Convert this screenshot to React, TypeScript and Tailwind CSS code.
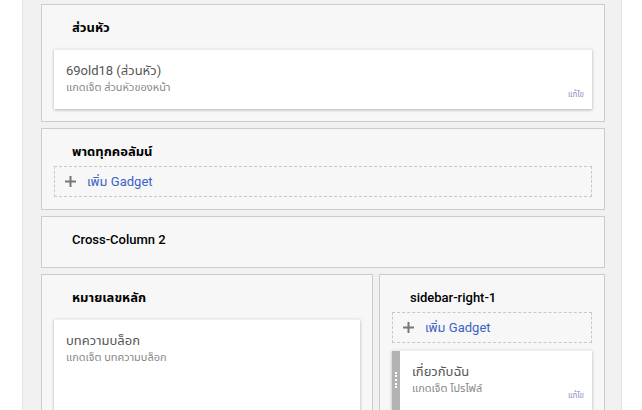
import React from 'react';

const font = { fontFamily: 'Roboto, "Noto Sans", "Noto Sans Thai", "DejaVu Sans", sans-serif' };

const SectionTitle = ({ children, bold }: { children: React.ReactNode; bold?: boolean }) => (
  <div className={`pl-[18px] pt-[15px] pb-[6px] text-[13px] leading-[16px] text-black ${bold ? 'font-bold' : 'font-medium'}`}>
    {children}
  </div>
);

const AddGadget = () => (
  <div className="flex items-center h-[31px] border border-dashed border-[#c8c8c8] pl-[9px]">
    <svg width="13" height="13" viewBox="0 0 13 13" className="shrink-0">
      <path d="M6.5 1v11M1 6.5h11" stroke="#777" strokeWidth="2" />
    </svg>
    <span className="ml-[10px] text-[13px] text-[#3b62c9]">เพิ่ม Gadget</span>
  </div>
);

const Widget = ({
  title,
  sub,
  edit = true,
  grip,
  className = '',
}: {
  title: string;
  sub: string;
  edit?: boolean;
  grip?: boolean;
  className?: string;
}) => (
  <div className={`flex bg-white border-t border-[#eeeeee] shadow-[0_1px_3px_rgba(0,0,0,0.28)] ${className}`}>
    {grip && (
      <div className="w-[8px] shrink-0 bg-[#b3b3b3] flex justify-center pt-[21px]">
        <div className="w-[2px] h-[16px] border-l-2 border-dotted border-white" />
      </div>
    )}
    <div className="flex-1 relative pt-[12px] pl-[12px]">
      <div className="text-[13px] leading-[18px] text-[#555]">{title}</div>
      <div className="text-[11px] leading-[16px] text-[#888]">{sub}</div>
      {edit && (
        <div className="absolute right-[8px] bottom-[9px] text-[8px] leading-[10px] text-[#8f8fc8]">แก้ไข</div>
      )}
    </div>
  </div>
);

const Section = ({ children, className = '' }: { children: React.ReactNode; className?: string }) => (
  <div className={`bg-[#f7f7f7] border border-[#cccccc] px-[12px] ${className}`}>{children}</div>
);

export default function App() {
  return (
    <div className="min-h-screen bg-white flex" style={font}>
      <div className="ml-[22px] w-[600px] bg-[#f1f1f1] border-l border-r border-[#e3e3e3] pl-[18px] pr-[16px] pt-[4px] flex flex-col gap-[6px]">
        <Section className="pb-[12px]">
          <SectionTitle bold>ส่วนหัว</SectionTitle>
          <Widget title="69old18 (ส่วนหัว)" sub="แกดเจ็ต ส่วนหัวของหน้า" className="mt-[7px] h-[60px]" />
        </Section>
        <Section className="pb-[12px]">
          <SectionTitle bold>พาดทุกคอลัมน์</SectionTitle>
          <AddGadget />
        </Section>
        <Section className="pb-[13px]">
          <SectionTitle>Cross-Column 2</SectionTitle>
        </Section>
        <div className="flex gap-[6px]">
          <Section className="w-[332px] shrink-0 pb-[12px]">
            <SectionTitle bold>หมายเลขหลัก</SectionTitle>
            <Widget title="บทความบล็อก" sub="แกดเจ็ต บทความบล็อก" edit={false} className="mt-[7px] h-[160px]" />
          </Section>
          <Section className="flex-1 pb-[12px]">
            <SectionTitle>sidebar-right-1</SectionTitle>
            <AddGadget />
            <Widget title="เกี่ยวกับฉัน" sub="แกดเจ็ต โปรไฟล์" grip className="mt-[7px] h-[60px]" />
          </Section>
        </div>
      </div>
    </div>
  );
}
